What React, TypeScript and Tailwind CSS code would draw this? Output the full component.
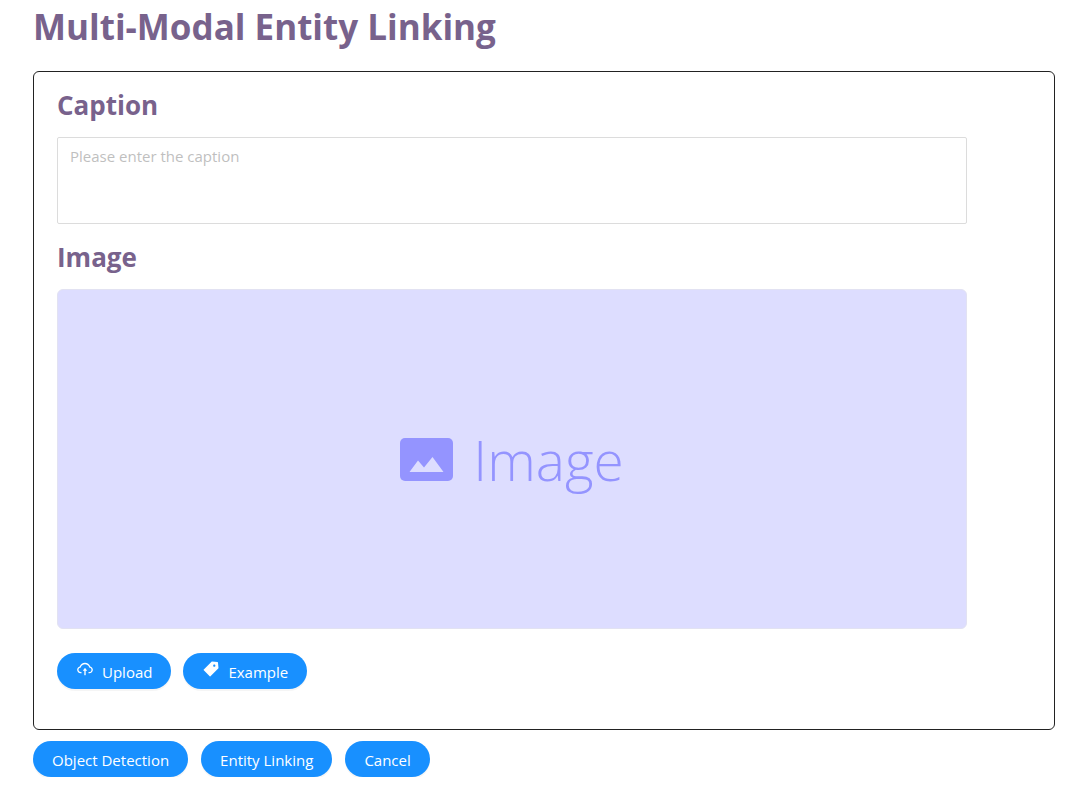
import { useState } from "react";
import type { ButtonHTMLAttributes } from "react";
import { AiFillTag, AiOutlineCloudUpload } from "react-icons/ai";

function PillButton({
  children,
  ...props
}: ButtonHTMLAttributes<HTMLButtonElement>) {
  return (
    <button
      type="button"
      className="flex h-9 cursor-pointer items-center rounded-full bg-[#1890ff] px-[19px] pt-0.5 text-[15px] text-white shadow-[0_2px_0_rgba(0,0,0,0.04)] hover:bg-[#40a9ff]"
      {...props}
    >
      {children}
    </button>
  );
}

function ImagePlaceholder() {
  return (
    <div className="flex h-[340px] items-center justify-center gap-5 rounded-md border border-[#e2e2f2] bg-[#ddddff] text-[#9494ff]">
      <svg viewBox="0 0 53 43" className="w-[53px]" aria-hidden="true">
        <rect width="53" height="43" rx="5" fill="currentColor" />
        <path d="M9.500 34 18 22.500 24 29.500 32.500 19 43.500 34Z" fill="#ddddff" />
      </svg>
      <span className="text-[55px] leading-none font-light">Image</span>
    </div>
  );
}

export default function App() {
  const [caption, setCaption] = useState("");

  return (
    <main className="pr-[25px] pl-[33px] font-['Open_Sans','Noto_Sans',sans-serif]">
      <h1 className="mb-5 pt-0.5 text-[35px] leading-[49px] font-bold text-[#78628c]">
        Multi-Modal Entity Linking
      </h1>

      <section className="rounded-md border border-[#222222] px-[23px] pt-4 pb-10">
        <div className="mr-16">
          {/* Caption */}
          <h2 className="mb-[15px] text-[26px] leading-[34px] font-bold text-[#78628c]">
            <label htmlFor="caption">Caption</label>
          </h2>
          <textarea
            id="caption"
            value={caption}
            onChange={(e) => setCaption(e.target.value)}
            placeholder="Please enter the caption"
            className="block h-[87px] w-full resize-none rounded-xs border border-[#dcdcdc] px-3 py-1.5 text-[15px] leading-6 outline-none placeholder:text-[#bfbfbf] focus:border-[#40a9ff]"
          />

          {/* Image */}
          <h2 className="mt-4 mb-[15px] text-[26px] leading-[34px] font-bold text-[#78628c]">
            Image
          </h2>
          <ImagePlaceholder />
        </div>

        <div className="mt-6 flex gap-3">
          <PillButton>
            <AiOutlineCloudUpload className="mr-2 mb-1.5 size-[18px]" aria-hidden="true" />
            Upload
          </PillButton>
          <PillButton>
            <AiFillTag className="mr-2 mb-1.5 size-[18px]" aria-hidden="true" />
            Example
          </PillButton>
        </div>
      </section>

      <div className="mt-[11px] flex gap-[13px]">
        <PillButton>Object Detection</PillButton>
        <PillButton>Entity Linking</PillButton>
        <PillButton>Cancel</PillButton>
      </div>
    </main>
  );
}
